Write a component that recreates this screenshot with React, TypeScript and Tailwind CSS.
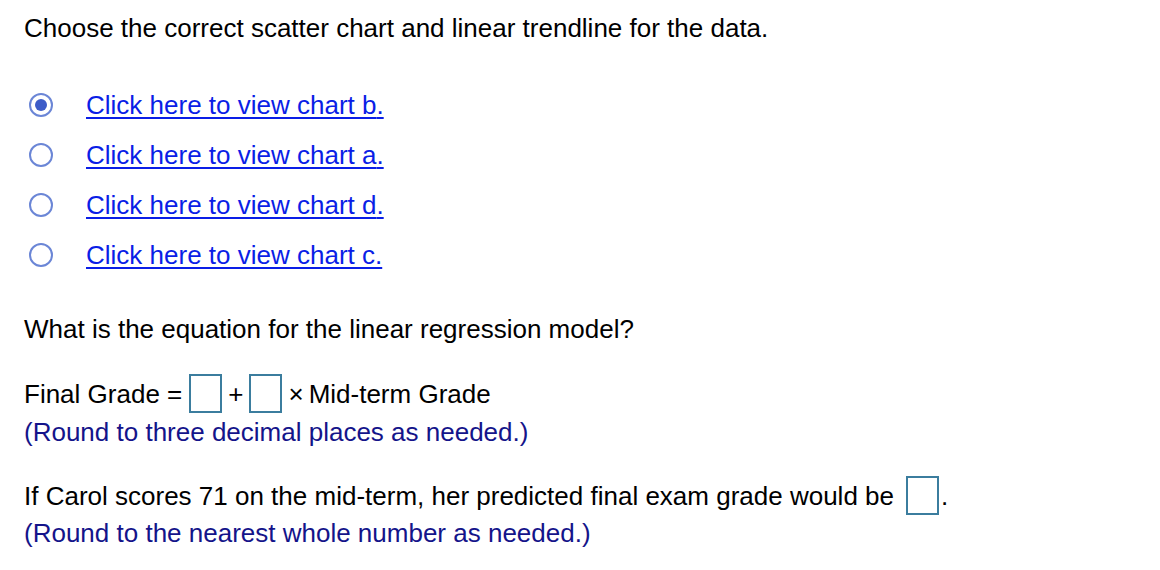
import { useState } from "react";

const charts = ["b", "a", "d", "c"];

function Radio({ checked }: { checked: boolean }) {
  return (
    <span className="flex h-6 w-6 items-center justify-center rounded-full border-2 border-[#6b86d6]">
      {checked && <span className="h-3 w-3 rounded-full bg-[#3d5cc8]" />}
    </span>
  );
}

function AnswerBox() {
  return <span className="block h-[39px] w-[33px] border-2 border-[#3b7d9e] bg-white" />;
}

export default function App() {
  const [selected, setSelected] = useState("b");

  return (
    <main className="min-h-screen bg-white px-6 pt-[13px] font-['Liberation_Sans',Arial,sans-serif] text-[26px] leading-[30px] text-black">
      {/* Question */}
      <p>Choose the correct scatter chart and linear trendline for the data.</p>

      {/* Choices */}
      <ul className="mt-[47px] flex flex-col gap-[20px]">
        {charts.map((c) => (
          <li key={c} className="flex h-[30px] items-center" onClick={() => setSelected(c)}>
            <span className="ml-[5px] mr-[33px]">
              <Radio checked={selected === c} />
            </span>
            <a href="#" className="text-[#0a1ee6] underline underline-offset-[3px]">
              Click here to view chart {c}.
            </a>
          </li>
        ))}
      </ul>

      {/* Regression equation */}
      <p className="mt-[44px]">What is the equation for the linear regression model?</p>

      <div className="mt-[30px] flex h-[39px] items-center">
        <span>Final Grade =</span>
        <span className="ml-[7px]"><AnswerBox /></span>
        <span className="mx-[6px]">+</span>
        <AnswerBox />
        <span className="ml-[6px] mr-[5px]">×</span>
        <span>Mid-term Grade</span>
      </div>
      <p className="mt-[4px] text-[#14148a]">(Round to three decimal places as needed.)</p>

      {/* Prediction */}
      <div className="mt-[29px] flex h-[39px] items-center">
        <span>If Carol scores 71 on the mid-term, her predicted final exam grade would be</span>
        <span className="ml-[12px]"><AnswerBox /></span>
        <span className="ml-[2px]">.</span>
      </div>
      <p className="mt-[3px] text-[#14148a]">(Round to the nearest whole number as needed.)</p>
    </main>
  );
}
